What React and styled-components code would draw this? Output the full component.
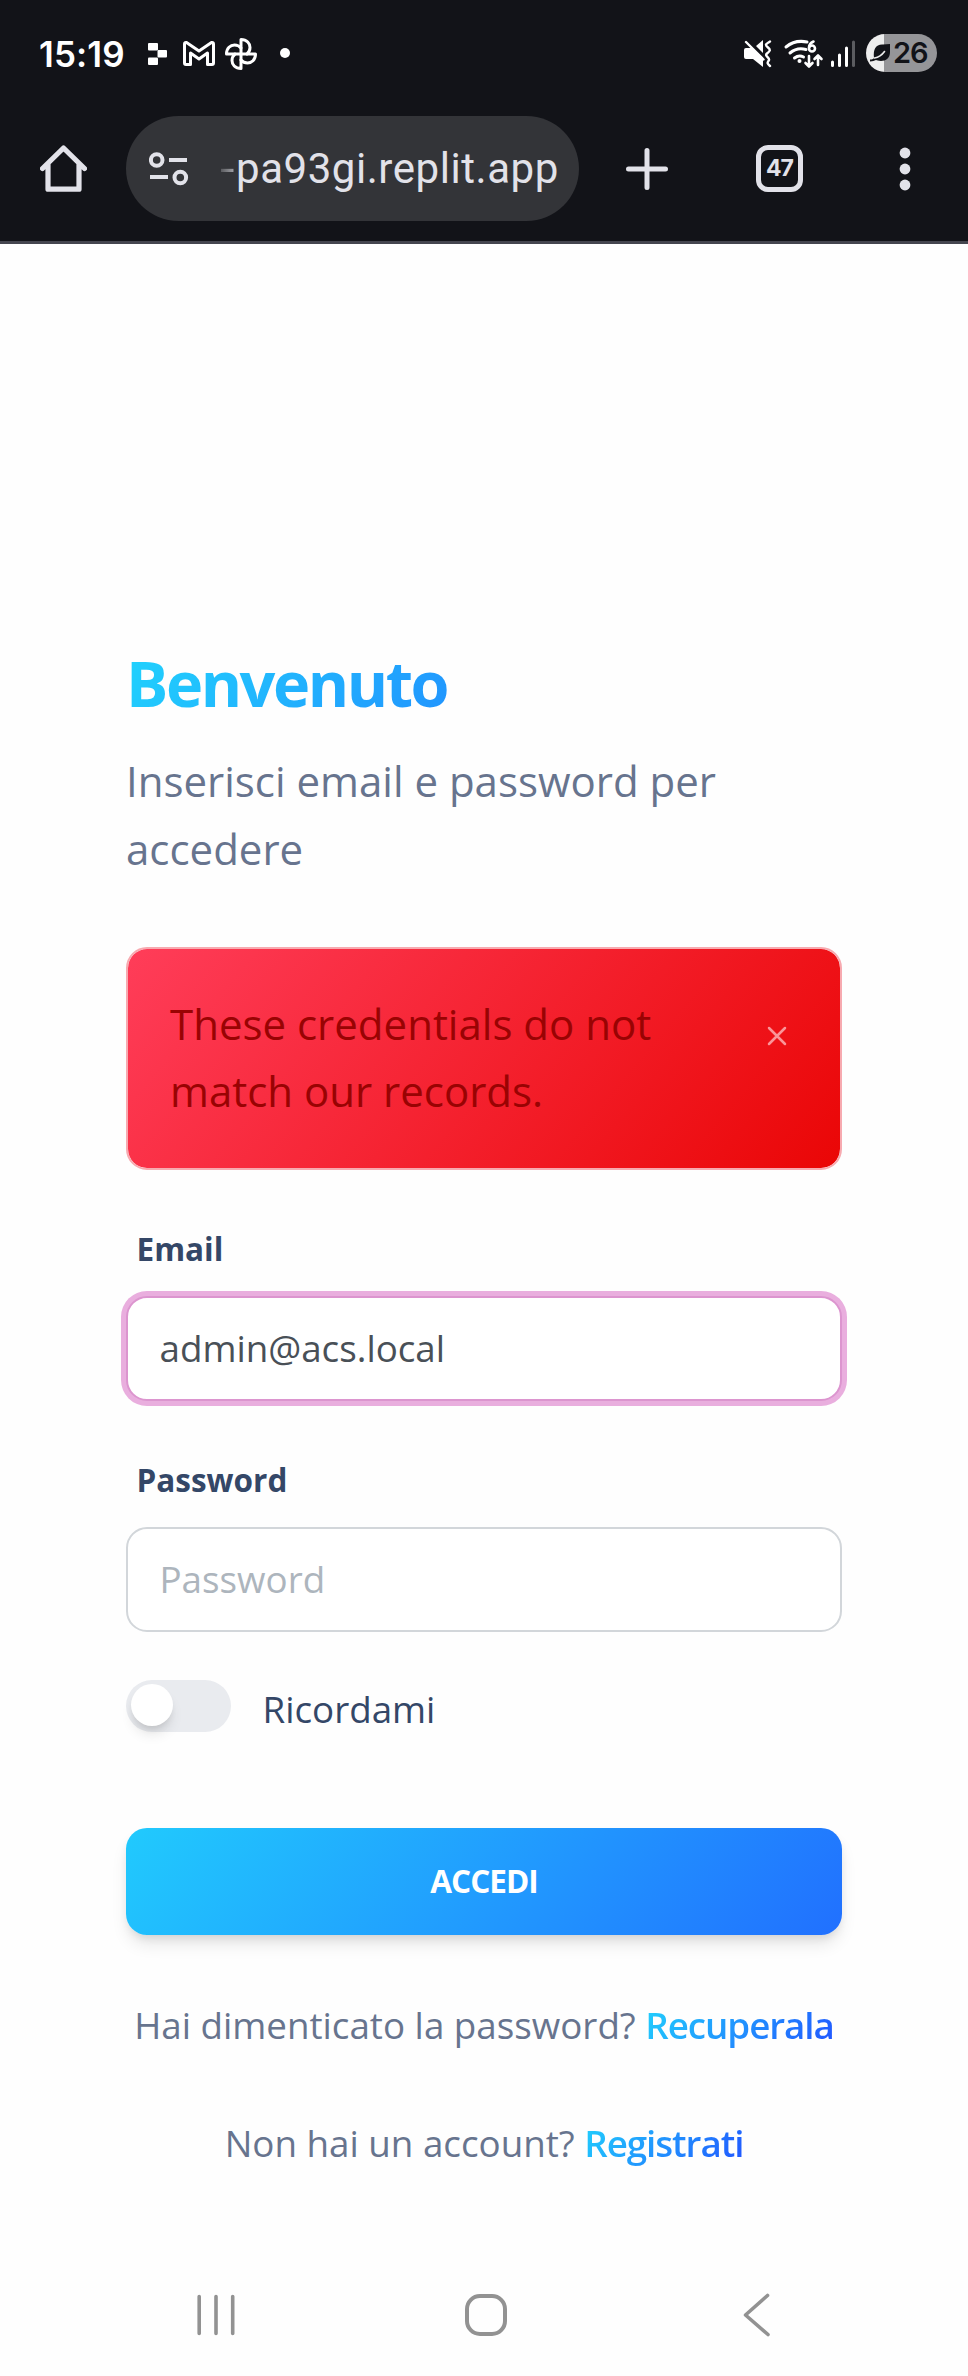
import React from "react";
import styled, { createGlobalStyle } from "styled-components";

const Global = createGlobalStyle`
  * { box-sizing: border-box; }
  body { margin: 0; background: #fefefe; }
`;

const info = "linear-gradient(310deg, #2152ff, #21d4fd)";

const Screen = styled.div`
  width: 968px;
  height: 2376px;
  display: flex;
  flex-direction: column;
  background: #fefefe;
  font-family: "Open Sans", sans-serif;
  overflow: hidden;
`;

const BrowserChrome = styled.header`
  height: 244px;
  flex: none;
  background: #121318;
  border-bottom: 3px solid #45464f;
`;

const StatusBar = styled.div`
  height: 106px;
  padding: 0 31px 0 39px;
  display: flex;
  justify-content: space-between;
  align-items: center;
`;

const StatusGroup = styled.div`
  display: flex;
  align-items: center;
  height: 106px;
`;

const Clock = styled.span`
  width: 109px;
  padding-top: 1px;
  font: 600 35px/40px Inter, sans-serif;
  letter-spacing: 0.1px;
  color: #fff;
`;

const Battery = styled.div`
  display: flex;
  align-items: center;
  width: 71px;
  height: 38px;
  margin-left: 11px;
  padding-left: 4px;
  border-radius: 19px;
  background: linear-gradient(90deg, #ededed 18px, #959598 18px);
  font: 600 29px/38px Inter, sans-serif;
  letter-spacing: -1px;
  color: #121318;
`;

const Toolbar = styled.div`
  display: flex;
  align-items: center;
  height: 125px;
  padding-left: 40px;

  > * { flex: none; }
`;

const AddressPill = styled.div`
  display: flex;
  align-items: center;
  width: 453px;
  height: 105px;
  margin: 0 47px 0 39px;
  padding-left: 23px;
  border-radius: 53px;
  background: #333438;
`;

const Url = styled.span`
  margin-left: 31px;
  white-space: nowrap;
  font: 400 42px/50px Roboto, sans-serif;
  letter-spacing: 0.55px;
  color: #e2e2e9;
`;

const Fade = styled.span`
  display: inline-block;
  width: 16px;
  transform: scaleX(1.25);
  transform-origin: left;
  background: linear-gradient(90deg, #55565a, #c0c0c6);
  background-clip: text;
  color: transparent;
`;

const TabCount = styled.div`
  width: 47px;
  height: 47px;
  margin: 0 96px 0 88px;
  border: 5px solid #e2e2e9;
  border-radius: 12px;
  font: 700 23px/37px Inter, sans-serif;
  letter-spacing: -1px;
  text-align: center;
  color: #e2e2e9;
`;

const Card = styled.main`
  flex: 1;
  padding: 395px 126px 0;
`;

const Title = styled.h3`
  margin: 0 0 21px;
  font-size: 63px;
  font-weight: 700;
  line-height: 87px;
  letter-spacing: -2.45px;
  background: ${info};
  background-clip: text;
  color: transparent;
`;

const Subtitle = styled.p`
  margin: 0;
  font-size: 42px;
  line-height: 67.5px;
  color: #67748e;
`;

const Alert = styled.div`
  display: flex;
  justify-content: space-between;
  height: 223px;
  margin-top: 65px;
  padding: 41px 53px 0 42px;
  border: 2px solid #f7aab0;
  border-radius: 21px;
  background: linear-gradient(310deg, #ea0606, #ff3d59) padding-box;
  color: #990303;
  font-size: 42px;
  line-height: 67.2px;
`;

const AlertText = styled.span`
  width: 520px;
`;

const Dismiss = styled.button`
  display: flex;
  align-items: flex-start;
  height: 60px;
  padding: 36px 0 0;
  border: 0;
  background: none;
`;

const Label = styled.label`
  display: block;
  margin: ${(p) => p.$top}px 0 0 10.5px;
  font-size: 31.5px;
  font-weight: 700;
  line-height: 44px;
  color: #344767;
`;

const Input = styled.input`
  display: block;
  width: 716px;
  height: 105px;
  margin-top: ${(p) => p.$top}px;
  padding: 0 31.5px 2px;
  border: 2px solid ${(p) => (p.$active ? "#dc95cf" : "#d2d6da")};
  border-radius: 21px;
  outline: none;
  background: #fff;
  box-shadow: ${(p) => (p.$active ? "0 0 0 5px #e9aede" : "none")};
  font: 400 36.75px/52px "Open Sans", sans-serif;
  color: #495057;
  &::placeholder { color: #adb5bd; opacity: 1; }
`;

const Remember = styled.label`
  display: flex;
  height: 52px;
  margin-top: 48px;
  font-size: 36.75px;
  line-height: 58px;
  color: #344767;
`;

const Switch = styled.span`
  width: 105px;
  height: 52px;
  margin-right: 31.5px;
  padding: 4px 5px;
  border-radius: 26px;
  background: #e9ebef;
`;

const Knob = styled.span`
  display: block;
  width: 42px;
  height: 42px;
  border-radius: 50%;
  background: #fff;
  box-shadow: 0 10px 14px -3px rgba(20, 20, 20, 0.12), 0 5px 7px -3px rgba(20, 20, 20, 0.1);
`;

const Submit = styled.button`
  display: block;
  width: 716px;
  height: 107px;
  margin-top: 96px;
  padding: 0 0 1px;
  border: 0;
  border-radius: 21px;
  background: ${info} 25% 0 / 150%;
  box-shadow: 0 11px 18px -3px rgba(0, 0, 0, 0.11), 0 5px 10px -3px rgba(0, 0, 0, 0.1);
  font: 700 31.5px/44px "Open Sans", sans-serif;
  letter-spacing: -1px;
  text-transform: uppercase;
  color: #fff;
`;

const Hint = styled.p`
  margin: ${(p) => p.$top}px 0 0;
  text-align: center;
  white-space: nowrap;
  font-size: 36.75px;
  line-height: 56px;
  color: #67748e;
`;

const Link = styled.a`
  display: inline-block;
  font-weight: 600;
  letter-spacing: -1.05px;
  background: ${info};
  background-clip: text;
  color: transparent;
`;

const NavBar = styled.nav`
  display: flex;
  align-items: center;
  justify-content: space-between;
  flex: none;
  height: 122px;
  padding: 0 197px 0 196px;
`;

const HomeButton = styled.svg`
  margin-right: 7px;
`;

const line = { fill: "none", strokeLinecap: "round", strokeLinejoin: "round" };

const blade = "M241 54V39.500C247 39.500 250 43.500 250 47.500Q250 51.500 247 54";

const NotificationIcons = () => (
  <svg width="150" height="40" viewBox="148 33 150 40" fill="#fff">
    <rect x="148" y="43" width="10" height="7.5" rx="1" />
    <rect x="157.5" y="50" width="9.5" height="7.5" rx="1" />
    <rect x="148" y="57.5" width="10" height="7.5" rx="1" />
    <path {...line} stroke="#fff" strokeWidth="3" d="M184.5 44v19q0 1.500 1.500 1.500h4.500V53l8.500 6 8.500-6v11.500h4.500q1.500 0 1.500-1.500V44q0-2-2-1.500L199 51l-12.500-8.500q-2-.500-2 1.500z" />
    <g {...line} stroke="#fff" strokeWidth="3">
      {[0, 90, 180, 270].map((angle) => (
        <path key={angle} d={blade} transform={`rotate(${angle} 241 54)`} />
      ))}
    </g>
    <circle cx="285" cy="53" r="5" />
  </svg>
);

const SystemIcons = () => (
  <svg width="112" height="40" viewBox="743 33 112 40">
    <path fill="#fff" d="M744 50q0-2 2-2h6L763 58v9l-10-8h-7q-2 0-2-2zM763 40v13l-7-7z" />
    <path {...line} stroke="#fff" strokeWidth="2.400" d="M746 42l17.500 17.500M770 41.500c-5 3-5 3.500-2 6s2 3.500-1 6 3 4 2 6.500-3 2.500 1 6" />
    <g {...line} stroke="#fff" strokeWidth="3">
      <path d="M786 47q9-7.500 21-5M790 53q7-6 16-3.500M794.500 58q4.500-3.500 9-1" />
      <path strokeWidth="2.600" d="M809 56v10M805.500 63l3.500 3.500 3.500-3.500M818 65V56M814.500 59l3.500-3.500 3.500 3.500M813.500 41.500q-4.500 2-4.500 6" />
      <circle cx="812" cy="48.500" r="3" strokeWidth="2.600" />
    </g>
    <circle cx="799.500" cy="61" r="2" fill="#fff" />
    <path {...line} stroke="#fff" strokeWidth="3" d="M832.500 62v3.500M839.500 55v10.500M846.500 48v17.500" />
    <path {...line} stroke="#5b5c60" strokeWidth="3" d="M853.500 42v23.500" />
  </svg>
);

const Leaf = () => (
  <svg width="23" height="20" viewBox="0 0 23 20">
    <path fill="#121318" d="M20 1v8c0 6-4 9-9 9-3 0-4-1-5-1-2 1-3 1-6 1.500l0-2c2 0 3-.5 4-1.500C3 6 6 1 13 1.500z" />
    <path d="M4.500 15q6-1 10-6.500" {...line} stroke="#ededed" strokeWidth="1.600" />
  </svg>
);

const HomeIcon = () => (
  <svg width="47" height="48" viewBox="0 0 47 48" {...line} stroke="#e2e2e9" strokeWidth="5.200">
    <path d="M2.500 23.500L23.500 3l21 20.500M8 19v25.200h31V19" />
  </svg>
);

const TuneIcon = () => (
  <svg width="40" height="34" viewBox="0 0 40 34" fill="none" stroke="#e2e2e9" strokeWidth="4">
    <circle cx="7.700" cy="8" r="5.800" />
    <path d="M20 8h18M1 25h18" />
    <circle cx="31.300" cy="25.500" r="5.800" />
  </svg>
);

const PlusIcon = () => (
  <svg width="42" height="42" viewBox="0 0 42 42" {...line} stroke="#e2e2e9" strokeWidth="5">
    <path d="M21 2.500v37M2.500 21h37" />
  </svg>
);

const MoreIcon = () => (
  <svg width="12" height="44" viewBox="0 0 12 44" fill="#e2e2e9">
    <circle cx="6" cy="6" r="5.400" />
    <circle cx="6" cy="22" r="5.400" />
    <circle cx="6" cy="38" r="5.400" />
  </svg>
);

export default function App() {
  return (
    <Screen>
      <Global />
      <BrowserChrome>
        <StatusBar>
          <StatusGroup>
            <Clock>15:19</Clock>
            <NotificationIcons />
          </StatusGroup>
          <StatusGroup>
            <SystemIcons />
            <Battery><Leaf />26</Battery>
          </StatusGroup>
        </StatusBar>
        <Toolbar>
          <HomeIcon />
          <AddressPill>
            <TuneIcon />
            <Url><Fade>-</Fade>pa93gi.replit.app</Url>
          </AddressPill>
          <PlusIcon />
          <TabCount>47</TabCount>
          <MoreIcon />
        </Toolbar>
      </BrowserChrome>
      <Card>
        <Title>Benvenuto</Title>
        <Subtitle>Inserisci email e password per accedere</Subtitle>
        <Alert>
          <AlertText>These credentials do not match our records.</AlertText>
          <Dismiss aria-label="Chiudi">
            <svg width="20" height="20" viewBox="0 0 20 20" {...line} stroke="#fa9599" strokeWidth="2.500">
              <path d="M2 2l16 16M18 2L2 18" />
            </svg>
          </Dismiss>
        </Alert>
        <Label $top={57}>Email</Label>
        <Input $top={25} $active defaultValue="admin@acs.local" />
        <Label $top={57}>Password</Label>
        <Input $top={25} placeholder="Password" />
        <Remember>
          <Switch><Knob /></Switch>
          Ricordami
        </Remember>
        <Submit>Accedi</Submit>
        <Hint $top={62}>Hai dimenticato la password? <Link>Recuperala</Link></Hint>
        <Hint $top={62}>Non hai un account? <Link>Registrati</Link></Hint>
      </Card>
      <NavBar>
        <svg width="40" height="44" viewBox="0 0 40 44" {...line} stroke="#929292" strokeWidth="3.600">
          <path d="M3.200 3.500v37M20 3.500v37M36.700 3.500v37" />
        </svg>
        <HomeButton width="42" height="42" viewBox="0 0 42 42" fill="none" stroke="#929292" strokeWidth="4">
          <rect x="2" y="2" width="38" height="38" rx="13" />
        </HomeButton>
        <svg width="28" height="44" viewBox="0 0 28 44" {...line} stroke="#929292" strokeWidth="3.600">
          <path d="M24.500 2.500L2.500 22l22.500 19.500" />
        </svg>
      </NavBar>
    </Screen>
  );
}
